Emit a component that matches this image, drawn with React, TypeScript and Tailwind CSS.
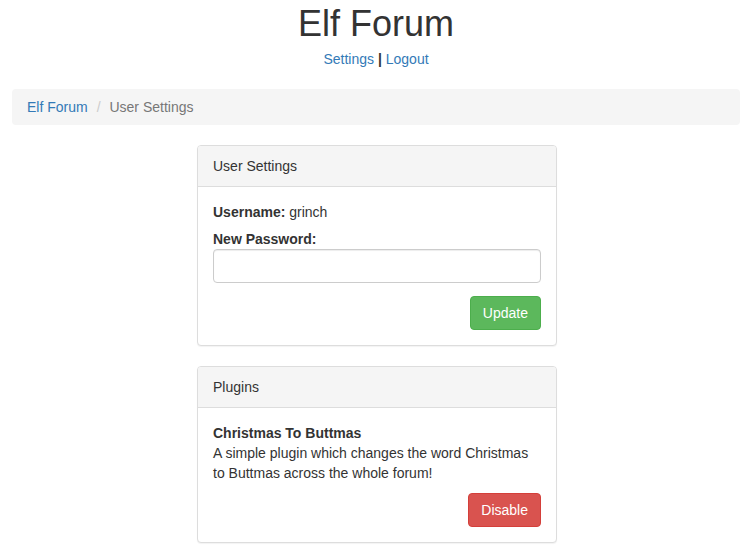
import React from "react";

export default function App() {
  return (
    <div
      className="min-h-[551px] bg-white text-[14px] leading-[20px] text-[#333]"
      style={{ fontFamily: '"Liberation Sans", Arial, Helvetica, sans-serif' }}
    >
      <div className="text-center">
        <h1 className="pt-[4px] text-[36px] leading-[40px] font-normal text-[#333]">Elf Forum</h1>
        <div className="mt-[5px]">
          <a href="#" className="text-[#337ab7]">Settings</a>
          <span className="font-bold"> | </span>
          <a href="#" className="text-[#337ab7]">Logout</a>
        </div>
      </div>

      <div className="mx-[12px] mt-[20px] flex items-center rounded-[4px] bg-[#f5f5f5] px-[15px] py-[8px]">
        <a href="#" className="text-[#337ab7]">Elf Forum</a>
        <span className="ml-[4px] px-[5px] text-[#ccc]">/&nbsp;</span>
        <span className="text-[#777]">User Settings</span>
      </div>

      <div className="ml-[197px] mt-[20px] w-[360px]">
        <div className="rounded-[4px] border border-[#ddd] bg-white shadow-[0_1px_1px_rgba(0,0,0,0.05)]">
          <div className="rounded-t-[3px] border-b border-[#ddd] bg-[#f5f5f5] px-[15px] py-[10px]">User Settings</div>
          <div className="p-[15px]">
            <div className="mb-[7px]">
              <span className="font-bold">Username:</span> grinch
            </div>
            <label className="block font-bold">New Password:</label>
            <input
              type="password"
              className="block h-[34px] w-full rounded-[4px] border border-[#ccc] bg-white px-[12px] shadow-[inset_0_1px_1px_rgba(0,0,0,0.075)] outline-none"
            />
            <div className="mt-[13px] flex justify-end">
              <button className="h-[34px] rounded-[4px] border border-[#4cae4c] bg-[#5cb85c] px-[12px] text-[14px] text-white">
                Update
              </button>
            </div>
          </div>
        </div>

        <div className="mt-[20px] rounded-[4px] border border-[#ddd] bg-white shadow-[0_1px_1px_rgba(0,0,0,0.05)]">
          <div className="rounded-t-[3px] border-b border-[#ddd] bg-[#f5f5f5] px-[15px] py-[10px]">Plugins</div>
          <div className="p-[15px]">
            <div className="font-bold">Christmas To Buttmas</div>
            <p className="mb-[10px]">A simple plugin which changes the word Christmas to Buttmas across the whole forum!</p>
            <div className="flex justify-end">
              <button className="h-[34px] rounded-[4px] border border-[#d43f3a] bg-[#d9534f] px-[12px] text-[14px] text-white">
                Disable
              </button>
            </div>
          </div>
        </div>
      </div>
    </div>
  );
}
